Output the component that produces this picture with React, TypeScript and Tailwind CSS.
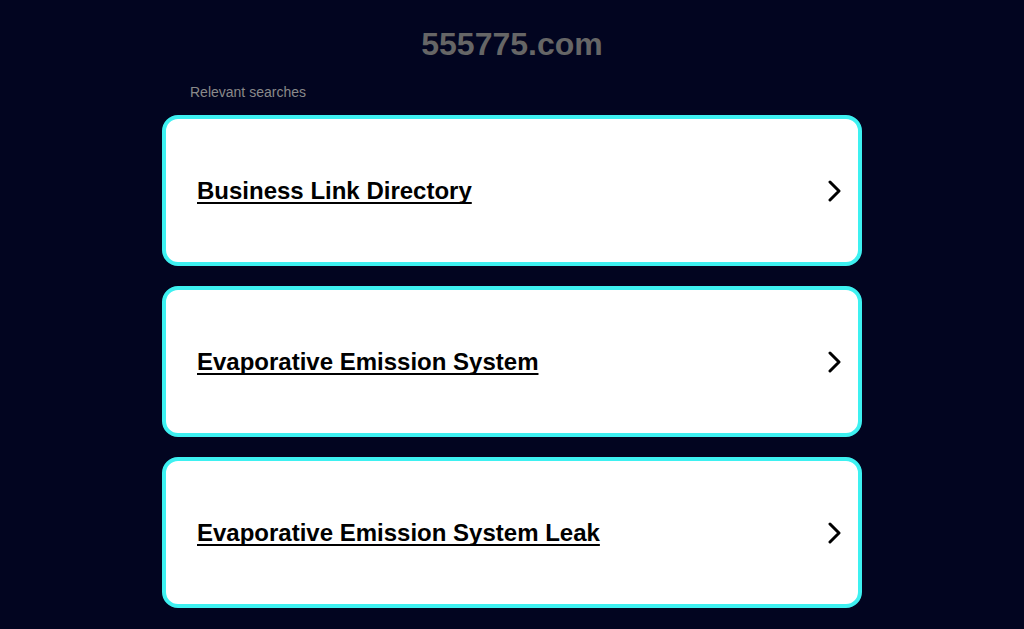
import React from 'react'

const searches = [
  'Business Link Directory',
  'Evaporative Emission System',
  'Evaporative Emission System Leak',
]

const Chevron = () => (
  <svg width="14" height="22" viewBox="0 0 14 22" fill="none" className="shrink-0">
    <path d="M2 2l9 9-9 9" stroke="#000" strokeWidth="3" strokeLinecap="round" strokeLinejoin="round" />
  </svg>
)

const App = () => {
  return (
    <div className="min-h-[629px] bg-[#020520] font-['Liberation_Sans',Arial,sans-serif] flex flex-col items-center">
      <h1 className="mt-[25px] text-[32px] leading-[38px] font-bold text-[#666666]">555775.com</h1>

      <div className="w-[700px] mt-[21px]">
        <p className="pl-[28px] text-[14px] leading-[16px] text-[#8a8a8a]">Relevant searches</p>

        <div className="mt-[15px] flex flex-col gap-[20px]">
          {searches.map((s, i) => (
            <a
              key={i}
              href="#"
              className="h-[151px] flex items-center justify-between rounded-[16px] border-[4px] border-[#3ef1f1] bg-white pl-[31px] pr-[16px]"
            >
              <span className="text-[24px] font-bold text-black underline decoration-[2px] underline-offset-[3px] [text-decoration-skip-ink:none]">{s}</span>
              <Chevron />
            </a>
          ))}
        </div>
      </div>
    </div>
  )
}

export default App
